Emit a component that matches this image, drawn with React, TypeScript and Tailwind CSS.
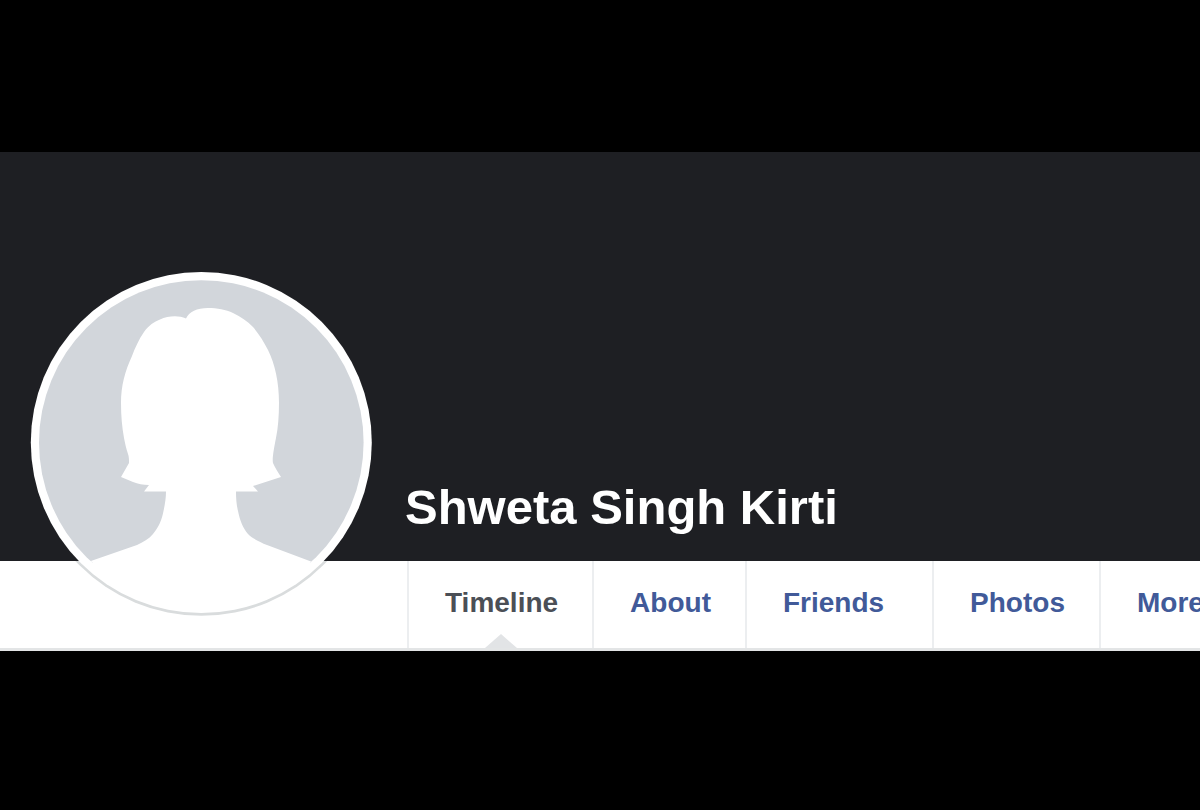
import clsx from "clsx";

const TABS = [
  { label: "Timeline", active: true },
  { label: "About" },
  { label: "Friends", wide: true },
  { label: "Photos" },
  { label: "More" },
];

function Avatar() {
  return (
    <svg viewBox="29 270 345 348" className="absolute top-[118px] left-[29px] z-10 h-[348px] w-[345px]" role="img" aria-label="Profile picture">
      <defs>
        <clipPath id="below-cover">
          <rect x="29" y="561" width="345" height="60" />
        </clipPath>
        <clipPath id="photo">
          <circle cx="201.3" cy="442.5" r="162.3" />
        </clipPath>
      </defs>
      {/* Outline is only visible over the white bar */}
      <circle cx="201.3" cy="443.5" r="172.3" fill="#d9dcdd" clipPath="url(#below-cover)" />
      <circle cx="201.3" cy="442.5" r="170.5" fill="#fff" />
      <g clipPath="url(#photo)">
        <rect x="29" y="270" width="345" height="293" fill="#d2d6db" />
        <path
          fill="#fff"
          d="M186 318.500C189 312 197 308 208 308C217 308 226 309.500 233 313C241 317 247 321 253 327C259 334 264 342 268 350C275 364 279 382 279 403C279 416 278 428 276 438C274 448 272 459 273 463C275 468 278 472 281 477L253 486L258 491.500H236C236 498 236.500 505 238 511C240 521 243 528 248 534C253 539 260 542 267 545L315 563L340 620H60L88 562L137 545C143 542 149 539 153 534C159 527 162 519 163.500 511C165 504 166 498 166 491.500H144L149 485C143 485 138 484 133 482L121 477L129 463C129 459 129 457 128 454C126 448 125 443 124 438C122 427 121 416 121 403C121 386 125 371 132 356C135 348 139 339 144 332C149 325 154 322 160 319.500C168 316 178 315 186 318.500Z"
        />
      </g>
    </svg>
  );
}

export default function App() {
  return (
    <div className="min-h-screen overflow-hidden bg-black pt-[152px] font-['Liberation_Sans',Arial,sans-serif] font-bold">
      <header className="relative">
        <Avatar />

        {/* Cover */}
        <div className="flex h-[409px] items-end bg-[#1e1f23] pb-6 pl-[405px]">
          <h1 className="text-[49px] leading-[60px] whitespace-nowrap text-white">Shweta Singh Kirti</h1>
        </div>

        {/* Tabs */}
        <nav className="flex h-[90px] overflow-hidden border-b-3 border-[#e3e5e6] bg-white pl-[407px] text-[28px] leading-8">
          {TABS.map((tab) => (
            <a
              key={tab.label}
              href="#"
              className={clsx(
                "relative flex shrink-0 items-center border-l-2 border-[#eceef0] pb-1 pl-9",
                tab.wide ? "pr-12" : "pr-[34px]",
                tab.active ? "text-[#4b4f56]" : "text-[#415a99]"
              )}
            >
              {tab.label}
              {tab.active && (
                <svg viewBox="0 0 32 14" className="absolute bottom-0 left-1/2 h-[14px] w-8 -translate-x-1/2" aria-hidden="true">
                  <path d="M0 14L16 0L32 14Z" fill="#e2e4e6" />
                </svg>
              )}
            </a>
          ))}
        </nav>
      </header>
    </div>
  );
}
